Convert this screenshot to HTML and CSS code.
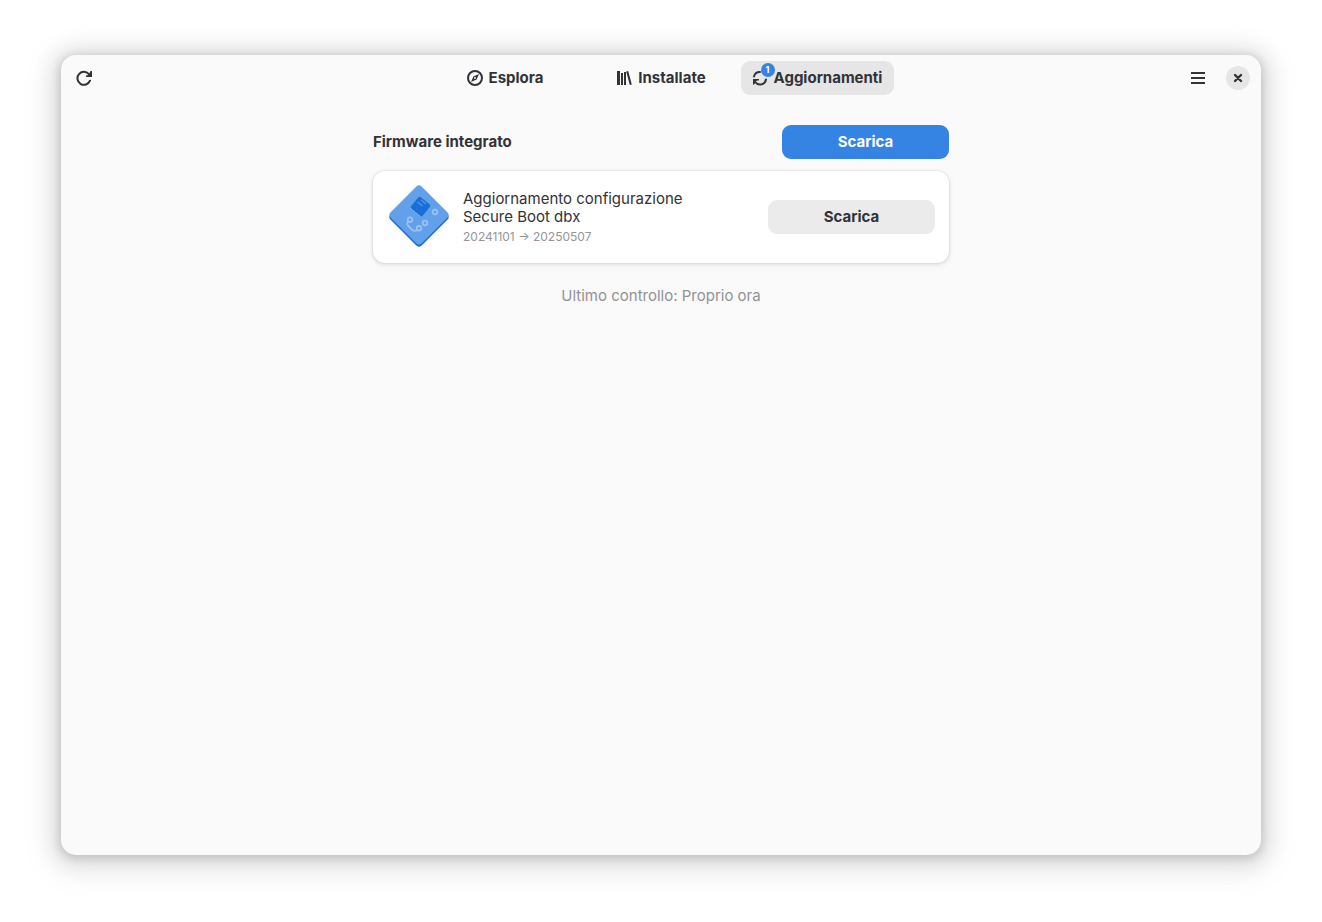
FILE: index.html
```html
<!DOCTYPE html>
<html lang="it">
<head>
  <meta charset="UTF-8">
  <title>Software - Aggiornamenti</title>
  <meta name="viewport" content="width=device-width, initial-scale=1">
<link rel="stylesheet" href="styles.css">
</head>
<body>
<div class="window">
  <header>
    <div class="start">
      <button class="icon" aria-label="Controlla aggiornamenti">
        <svg width="16" height="16" viewBox="0 0 16 16"><path d="M13.200 4.500A6.500 6.500 0 1 0 14 10.700" fill="none" stroke="currentColor" stroke-width="2" stroke-linecap="round"/><path d="M16 1v6h-6V5.500L12.500 5 14.500 1z"/></svg>
      </button>
    </div>
    <nav>
      <button>
        <svg width="16" height="16" viewBox="0 0 16 16"><circle cx="8" cy="8" r="7" fill="none" stroke="currentColor" stroke-width="2"/><path fill-rule="evenodd" d="M12 4L6.400 6.400 4 12l5.600-2.400zM8 7.100a.9.9 0 1 1 0 1.800.9.9 0 0 1 0-1.800z"/></svg>
        Esplora
      </button>
      <button>
        <svg width="16" height="16" viewBox="0 0 16 16"><path d="M1 1h3v14H1zM5 3h2v12H5zM8 2h2v13H8zM10.200 1.400l2-.5L15.800 14.500l-2 .5z"/></svg>
        Installate
      </button>
      <button class="active">
        <svg width="16" height="16" viewBox="0 0 16 16"><path d="M2 6.500A6 6 0 0 1 8 2M14 9.500A6 6 0 0 1 3.200 12" fill="none" stroke="currentColor" stroke-width="2" stroke-linecap="round"/><path d="M1 15V9h6v1.200l-3 .8-1.500 3z"/></svg>
        Aggiornamenti
        <span class="badge">1</span>
      </button>
    </nav>
    <div class="end">
      <button class="icon" aria-label="Menu">
        <svg width="16" height="16" viewBox="0 0 16 16"><path d="M1 2h14v2H1zM1 7h14v2H1zM1 12h14v2H1z"/></svg>
      </button>
      <button class="icon close" aria-label="Chiudi">
        <span><svg width="16" height="16" viewBox="0 0 16 16"><path d="M5 5l6 6M11 5l-6 6" stroke="currentColor" stroke-width="2.400" stroke-linecap="round"/></svg></span>
      </button>
    </div>
  </header>
  <main>
    <div class="section">
      <h2>Firmware integrato</h2>
      <button class="download suggested">Scarica</button>
    </div>
    <ul>
      <li>
        <svg class="firmware" width="64" height="64" viewBox="0 0 64 64">
          <rect x="10" y="10" width="44" height="44" rx="4" transform="rotate(45 32 32)" fill="#1f69c9"/>
          <rect x="10" y="8" width="44" height="44" rx="4" transform="rotate(45 32 30)" fill="#62a0ea"/>
          <g fill="none" stroke="#99c1f1" stroke-width="1.800">
            <path d="M26 22l-2 2.500M28.500 24l-2 2.500M31 26l-2 2.500M33.500 28l-2 2.500" stroke-width="1.700"/>
            <circle cx="48" cy="27" r="2.300"/>
            <circle cx="38" cy="38" r="2.300"/>
            <circle cx="23" cy="34.700" r="2.300"/>
            <circle cx="32" cy="43.300" r="2.300"/>
            <path d="M21.300 36.500q-2 2 0 4.500l4 4q2 1.500 5 .2"/>
          </g>
          <rect x="26" y="14" width="15" height="15" rx="2" transform="rotate(39 33.500 21.500)" fill="#1a6fd6"/>
          <path d="M30.500 17l5 4M34 15l5 4" stroke="#4f94e8" stroke-width="1.500"/>
        </svg>
        <div class="info">
          <h3>Aggiornamento configurazione Secure Boot dbx</h3>
          <p>20241101 → 20250507</p>
        </div>
        <button class="download">Scarica</button>
      </li>
    </ul>
    <p class="checked">Ultimo controllo: Proprio ora</p>
  </main>
</div>
</body>
</html>
```
FILE: styles.css
```css
*{margin:0;padding:0;box-sizing:border-box;}
body{min-height:100vh;padding:55px 61px 67px;display:flex;background:#fff;color:#323237;font:15px/18px Inter,"Noto Sans",sans-serif;}
button{border:0;background:none;color:inherit;font:inherit;font-weight:700;height:34px;border-radius:9px;}
svg{display:block;flex:none;fill:currentColor;}
ul{list-style:none;}

.window{flex:1;background:#fafafb;border-radius:15px;box-shadow:0 2px 8px 2px rgba(0,0,0,.13),0 3px 20px 10px rgba(0,0,0,.09),0 6px 32px 16px rgba(0,0,0,.04);}

header{display:grid;grid-template-columns:1fr auto 1fr;padding:6px;}
.start,.end{display:flex;gap:6px;}
.end{justify-content:flex-end;}
.icon{width:34px;display:flex;align-items:center;justify-content:center;}
.close span{padding:4px;border-radius:50%;background:#e6e6e7;}

nav{display:grid;grid-template-columns:repeat(3,153px);gap:3px;}
nav button{position:relative;display:flex;align-items:center;justify-content:center;gap:6px;}
nav .active{background:#e6e6e7;}
.badge{position:absolute;left:20px;top:2px;width:14px;height:14px;border-radius:50%;background:#3584e4;color:#fff;font-size:9px;line-height:14px;text-align:center;}

main{max-width:600px;margin:0 auto;padding:24px 12px;}
.section{display:flex;align-items:center;justify-content:space-between;margin-bottom:12px;}
h2{font-size:15px;font-weight:700;}
.download{width:167px;flex:none;background:#ebebeb;}
.suggested{background:#3584e4;color:#fff;}
li{display:flex;align-items:center;gap:12px;padding:14px;background:#fff;border-radius:12px;box-shadow:0 0 0 1px rgba(0,0,6,.03),0 1px 3px 1px rgba(0,0,6,.07),0 2px 6px 2px rgba(0,0,6,.03);}
.firmware{filter:drop-shadow(0 1px 1px rgba(0,0,0,.1));}
.info{flex:1;}
h3{max-width:240px;font-size:15px;font-weight:400;}
.info p{margin-top:3px;font-size:12px;line-height:16px;color:#959597;}
.checked{margin-top:24px;text-align:center;color:#929294;}
```
